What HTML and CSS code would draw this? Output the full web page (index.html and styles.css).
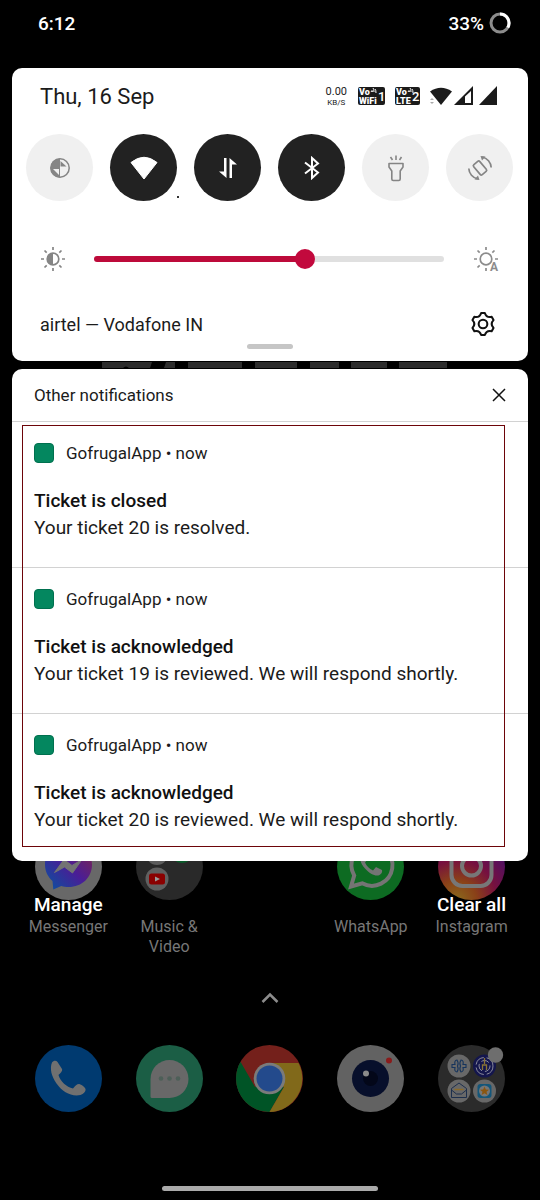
FILE: index.html
```html
<!DOCTYPE html>
<html lang="en">
<head>
    <meta charset="UTF-8">
    <meta name="viewport" content="width=device-width, initial-scale=1.0">
    <title>Notifications</title>
    <link rel="stylesheet" href="styles.css">
</head>
<body>
    <header class="status-bar">
        <span>6:12</span>
        <span class="battery">
            33%
            <svg width="22" height="22" viewBox="0 0 22 22" fill="none" stroke-width="3">
                <circle cx="11" cy="11" r="9" stroke="#8c8c8c"/>
                <path d="M11 2a9 9 0 0 1 7.8 13.5" stroke="#fff"/>
            </svg>
        </span>
    </header>

    <section class="card quick-settings">
        <div class="date-row">
            <span class="date">Thu, 16 Sep</span>
            <div class="net-speed"><span>0.00</span><small>KB/S</small></div>
            <div class="status-icons">
                <svg width="27" height="18" viewBox="0 0 27 18">
                    <rect width="27" height="18" rx="2" fill="#1b1b1b"/>
                    <text x="1" y="8" class="badge-text">Vo</text>
                    <text x="1" y="17" class="badge-text">WiFi</text>
                    <text x="20" y="14" class="badge-num">1</text>
                    <path d="M13 5q1-3 2 0M16 5q0-3-1-4M18 6q0-3-1-4" stroke="#fff" fill="none"/>
                </svg>
                <svg width="25" height="18" viewBox="0 0 25 18">
                    <rect width="25" height="18" rx="2" fill="#1b1b1b"/>
                    <text x="1" y="8" class="badge-text">Vo</text>
                    <text x="1" y="17" class="badge-text">LTE</text>
                    <text x="17" y="14" class="badge-num">2</text>
                    <path d="M13 5q1-3 2 0M16 5q0-3-1-4M18 6q0-3-1-4" stroke="#fff" fill="none"/>
                </svg>
                <svg width="68" height="20" viewBox="0 0 68 20">
                    <path d="M0 5.500Q11-2 22 5.500L11 19z" fill="#1b1b1b"/>
                    <path d="M0 14l2-2 2 2zM0 16l2 2 2-2z" fill="#aaa"/>
                    <path d="M24 19L43 0v19z" fill="#1b1b1b"/>
                    <path d="M35 10.500L41 5v12h-6z" fill="#fff"/>
                    <path d="M49 19L67 0v19z" fill="#1b1b1b"/>
                </svg>
            </div>
        </div>

        <div class="tiles">
            <button class="tile" aria-label="Data saver">
                <svg width="24" height="24" viewBox="0 0 24 24">
                    <circle cx="12" cy="12" r="9.200" fill="none" stroke="#858585" stroke-width="1.500"/>
                    <path d="M12 2.500a9.500 9.500 0 0 0 0 19z" fill="#858585"/>
                    <path d="M12.500 10.500V5l6 5.500z" fill="#858585"/>
                    <path d="M11 13v6l-6-6z" fill="#f0f0f0"/>
                </svg>
            </button>
            <button class="tile on" aria-label="Wi-Fi">
                <svg width="30" height="30" viewBox="0 0 30 30">
                    <path d="M2 9.500Q15-1 28 9.500L15 26z" fill="#fff" stroke="#fff" stroke-linejoin="round"/>
                </svg>
                <span class="tile-dot"></span>
            </button>
            <button class="tile on" aria-label="Mobile data">
                <svg width="24" height="24" viewBox="0 0 24 24" fill="#fff">
                    <path d="M8 2h2.500v20L3 15.500h5z"/>
                    <path d="M13.500 2l7.500 6.500h-5V22h-2.500z"/>
                </svg>
            </button>
            <button class="tile on" aria-label="Bluetooth">
                <svg width="24" height="24" viewBox="0 0 24 24" fill="none" stroke="#fff" stroke-width="2">
                    <path d="M5 6.500l13 10-6 5.500V2l6 5.500-13 10"/>
                </svg>
            </button>
            <button class="tile" aria-label="Flashlight">
                <svg width="26" height="28" viewBox="0 0 26 28" fill="none" stroke="#858585" stroke-width="1.600">
                    <path d="M6 9.500h14v3.500l-2.800 4v8q0 1.500-1.500 1.500h-5.400q-1.500 0-1.500-1.500v-8L6 13z" stroke-linejoin="round"/>
                    <path d="M13 1.500V6M7.500 3l2 3M18.500 3l-2 3"/>
                </svg>
            </button>
            <button class="tile" aria-label="Auto-rotate">
                <svg width="28" height="28" viewBox="0 0 28 28" fill="none" stroke="#858585" stroke-width="1.700">
                    <rect x="10" y="7.500" width="8" height="13" rx="1.500" transform="rotate(-40 14 14)"/>
                    <path d="M2.800 14.500a11.200 11.200 0 0 0 9 10.500M25.200 13.500a11.200 11.200 0 0 0-9-10.500"/>
                    <path d="M13.500 26l-5-.5 3.500-4zM14.500 2l5 .5-3.500 4z" fill="#858585" stroke="none"/>
                </svg>
            </button>
        </div>

        <div class="brightness">
            <svg width="26" height="26" viewBox="0 0 26 26" fill="none" stroke="#858585" stroke-width="1.700">
                <circle cx="13" cy="13" r="5.800"/>
                <path d="M13 7a6 6 0 0 0 0 12z" fill="#858585" stroke="none"/>
                <path d="M13 1v3M13 22v3M1 13h3M22 13h3M4.500 4.500l2.200 2.200M19.300 19.300l2.200 2.200M4.500 21.500l2.200-2.200M19.300 6.700l2.200-2.200"/>
            </svg>
            <input type="range" class="slider" min="0" max="100" value="61" aria-label="Brightness">
            <svg width="28" height="28" viewBox="0 0 28 28" fill="none" stroke="#8c8c8c" stroke-width="1.700">
                <circle cx="14" cy="14" r="5.800"/>
                <path d="M14 2v3M14 23v3M2 14h3M23 14h3M5.500 5.500l2.200 2.200M5.500 22.500l2.200-2.200M20.300 7.700l2.200-2.200"/>
                <text x="18" y="26" class="auto-text">A</text>
            </svg>
        </div>

        <div class="carrier-row">
            <span>airtel — Vodafone IN</span>
            <button class="icon-btn" aria-label="Settings">
                <svg width="26" height="26" viewBox="0 0 24 24" fill="none" stroke="#111" stroke-width="1.900" stroke-linejoin="round">
                    <circle cx="12" cy="12" r="4"/>
                    <path d="M10.300 1.800H13.700Q15.100 6.500 20 5.400L21.700 8.400Q18.300 12 21.700 15.600L20 18.600Q15.100 17.500 13.700 22.200H10.300Q8.900 17.500 4 18.600L2.300 15.600Q5.700 12 2.300 8.400L4 5.400Q8.900 6.500 10.300 1.800z"/>
                </svg>
            </button>
        </div>
        <div class="drag-handle"></div>
    </section>

    <!-- lower edge of the clock widget that shows between the cards -->
    <svg class="widget-strip" width="345" height="8" viewBox="0 0 345 8" fill="#2d2d2d">
        <path d="M0 1h50l-2 6H27q-3-3-6 0H0zM64 1h9v6H62zM86 1h54v6H86zM153 1h42v6h-42zM208 1h29v6h-29zM249 1h36v6h-36zM297 1h48v6h-48z"/>
    </svg>

    <section class="card notifications">
        <div class="notifications-header">
            <h2>Other notifications</h2>
            <button class="icon-btn" aria-label="Dismiss">
                <svg width="14" height="14" viewBox="0 0 14 14" stroke="#111" stroke-width="1.500">
                    <path d="M1 1l12 12M13 1L1 13"/>
                </svg>
            </button>
        </div>
        <div class="notification-list">
            <article class="notification">
                <div class="meta"><span class="app-icon"></span>GofrugalApp • now</div>
                <h3>Ticket is closed</h3>
                <p>Your ticket 20 is resolved.</p>
            </article>
            <article class="notification">
                <div class="meta"><span class="app-icon"></span>GofrugalApp • now</div>
                <h3>Ticket is acknowledged</h3>
                <p>Your ticket 19 is reviewed. We will respond shortly.</p>
            </article>
            <article class="notification">
                <div class="meta"><span class="app-icon"></span>GofrugalApp • now</div>
                <h3>Ticket is acknowledged</h3>
                <p>Your ticket 20 is reviewed. We will respond shortly.</p>
            </article>
            <div class="highlight"></div>
        </div>
        <div class="shade-actions">
            <button>Manage</button>
            <button>Clear all</button>
        </div>
    </section>

    <nav class="apps">
        <a href="#" class="app">
            <svg width="67" height="67" viewBox="0 0 67 67">
                <defs>
                    <linearGradient id="messenger" x1="0" y1="1" x2="1" y2="0">
                        <stop offset="0" stop-color="#0555a0"/>
                        <stop offset=".5" stop-color="#4a1d96"/>
                        <stop offset="1" stop-color="#85263f"/>
                    </linearGradient>
                </defs>
                <circle cx="33.500" cy="33.500" r="33.500" fill="#686868"/>
                <path d="M33.500 9C20 9 10 18 10 31.500c0 7 3 12.500 7.500 16.500l.8 8.500 8-3.500c2.300.6 4.500 1 7.200 1C47 54 57 44.500 57 31.500S47 9 33.500 9z" fill="url(#messenger)"/>
                <path d="M19.500 39.500l9.500-13 8 6 10-6-9.500 13.500-8-6z" fill="#737373" stroke="#737373" stroke-linejoin="round"/>
            </svg>
            <span>Messenger</span>
        </a>
        <a href="#" class="app">
            <svg width="67" height="67" viewBox="0 0 67 67">
                <circle cx="33.500" cy="33.500" r="33.500" fill="#292929"/>
                <circle cx="21" cy="21" r="11" fill="#5c5c5c"/>
                <circle cx="46" cy="19" r="11" fill="#0b5a2a"/>
                <circle cx="21" cy="46" r="11.500" fill="#606060"/>
                <rect x="13" y="40.500" width="16" height="11" rx="2.500" fill="#8a0000"/>
                <path d="M19 43.500l5 2.500-5 2.500z" fill="#999"/>
            </svg>
            <span>Music &amp; Video</span>
        </a>
        <a href="#" class="app app-third">
            <svg width="67" height="67" viewBox="0 0 67 67">
                <circle cx="33.500" cy="33.500" r="33.500" fill="#0d6b22"/>
                <path d="M14 53.500l3.200-11a20.500 20.500 0 1 1 8 7.800z" fill="none" stroke="#747474" stroke-width="4"/>
                <path d="M25 22c-3 3-2 8 3 13.500s11 8.500 14.500 6.500c2-1 3-3 2.500-5l-6-3-3 3.500c-4-2-6-4-8-8l2.500-3-2.500-6z" fill="#747474"/>
            </svg>
            <span>WhatsApp</span>
        </a>
        <a href="#" class="app">
            <svg width="67" height="67" viewBox="0 0 67 67">
                <defs>
                    <radialGradient id="insta" cx=".28" cy="1" r="1">
                        <stop offset="0" stop-color="#8a6a1d"/>
                        <stop offset=".3" stop-color="#8a4018"/>
                        <stop offset=".6" stop-color="#76103f"/>
                        <stop offset="1" stop-color="#46106a"/>
                    </radialGradient>
                </defs>
                <circle cx="33.500" cy="33.500" r="33.500" fill="url(#insta)"/>
                <g fill="none" stroke="#777" stroke-width="4">
                    <rect x="13.500" y="13" width="40" height="40" rx="11"/>
                    <circle cx="33.500" cy="33" r="9.500"/>
                </g>
                <circle cx="45" cy="22" r="2.500" fill="#777"/>
            </svg>
            <span>Instagram</span>
        </a>
    </nav>

    <svg class="chevron" width="20" height="12" viewBox="0 0 20 12" fill="none" stroke="#8c8c8c" stroke-width="2.500">
        <path d="M2.500 10L10 2.500l7.500 7.500"/>
    </svg>

    <nav class="apps dock">
        <a href="#" class="app" aria-label="Phone">
            <svg width="67" height="67" viewBox="0 0 67 67">
                <circle cx="33.500" cy="33.500" r="33.500" fill="#003a70"/>
                <path d="M17 17.500c1.500-2 4-2.500 5.500-.5l4.500 7c1 2-2.500 5-3.500 6 2 6.500 8 12 14.500 13.500 2-2.500 4-4.500 6-4.500 2.500.5 6 3 6.500 5 .5 2.500-2 5-5 6-9 2-18-3-24-11.500-5-7-7-15-4.500-21z" fill="#707070"/>
            </svg>
        </a>
        <a href="#" class="app" aria-label="Messages">
            <svg width="67" height="67" viewBox="0 0 67 67">
                <circle cx="33.500" cy="33.500" r="33.500" fill="#1b5e45"/>
                <path d="M16 53q-1.500 0-1.500-1.500V34a19 19 0 1 1 19 19z" fill="#686868"/>
                <g fill="#4d5f58">
                    <circle cx="25" cy="33.500" r="2.300"/>
                    <circle cx="33.500" cy="33.500" r="2.300"/>
                    <circle cx="42" cy="33.500" r="2.300"/>
                </g>
            </svg>
        </a>
        <a href="#" class="app" aria-label="Chrome">
            <svg width="67" height="67" viewBox="0 0 67 67">
                <circle cx="33.500" cy="33.500" r="33.500" fill="#74201b"/>
                <path d="M4.500 16.750A33.500 33.500 0 0 0 33.500 67L48 41.900 33.500 33.500 19 41.900z" fill="#005426"/>
                <path d="M33.500 67a33.500 33.500 0 0 0 29-49H33.500v16L48 41.900z" fill="#81691a"/>
                <circle cx="33.500" cy="33.500" r="15.800" fill="#7b7b7b"/>
                <circle cx="33.500" cy="33.500" r="13" fill="#234a8c"/>
            </svg>
        </a>
        <a href="#" class="app" aria-label="Camera">
            <svg width="67" height="67" viewBox="0 0 67 67">
                <circle cx="33.500" cy="33.500" r="33.500" fill="#626262"/>
                <circle cx="33.500" cy="33.500" r="18.500" fill="#070f2b"/>
                <circle cx="33.500" cy="33.500" r="7.500" fill="#030719"/>
                <circle cx="29" cy="28.500" r="3" fill="#8a8a8a"/>
                <circle cx="52" cy="15.500" r="3" fill="#8a1b1b"/>
            </svg>
        </a>
        <a href="#" class="app" aria-label="Folder">
            <svg width="67" height="67" viewBox="0 0 67 67">
                <circle cx="33.500" cy="33.500" r="33.500" fill="#2b2b2b"/>
                <g fill="#686868">
                    <circle cx="21" cy="21" r="11.500"/>
                    <circle cx="21" cy="46" r="11.500"/>
                    <circle cx="46.500" cy="46" r="11.500"/>
                </g>
                <circle cx="46.500" cy="21" r="11.500" fill="#14164d"/>
                <g fill="none" stroke="#8a8a9c">
                    <circle cx="46.500" cy="21" r="8.500" stroke-dasharray="11 3"/>
                    <circle cx="46.500" cy="21" r="5.500" stroke-dasharray="8 3"/>
                </g>
                <path d="M46.500 13v6M44.500 25v-5h4v5" fill="none" stroke="#8a7435" stroke-width="1.300"/>
                <path d="M14 19.500h3q-1-4 2-4.500 2 3 .5 6 1.500 3-.5 6-3-.5-2-4.500h-3zM28 19.500h-3q1-4-2-4.500-2 3-.5 6-1.500 3 .5 6 3-.5 2-4.500h3z" fill="none" stroke="#16345c" stroke-width="1.100"/>
                <path d="M13.500 43.500l7.500-5.500 7.500 5.500v9h-15zM13.500 45l5 4h5l5-4" fill="none" stroke="#1d2f4c"/>
                <path d="M16.500 44.500h9" stroke="#8a6a28" stroke-width="1.500"/>
                <rect x="39.500" y="39" width="14" height="14" rx="3" fill="#14567a"/>
                <circle cx="46.500" cy="46" r="5.500" fill="#777"/>
                <path d="M46.500 41.500l1.300 3 3.200.2-2.500 2 .9 3.300-2.900-1.800-2.900 1.800.9-3.300-2.500-2 3.200-.2z" fill="#8a5610"/>
                <circle cx="57.500" cy="10" r="7.700" fill="#6e6e6e"/>
            </svg>
        </a>
    </nav>
    <div class="home-bar"></div>
</body>
</html>
```
FILE: styles.css
```css
* {
    box-sizing: border-box;
}

body {
    margin: 0;
    min-height: 100vh;
    display: flex;
    flex-direction: column;
    background-color: #000;
    font-family: Roboto, "Liberation Sans", sans-serif;
    color: #1b1b1b;
}

h2, h3, p {
    margin: 0;
}

svg {
    display: block;
    flex-shrink: 0;
}

button {
    padding: 0;
    border: none;
    background: none;
    font-family: inherit;
    cursor: pointer;
}

.status-bar {
    display: flex;
    justify-content: space-between;
    align-items: center;
    height: 46px;
    margin-bottom: 22px;
    padding: 0 29px 0 38px;
    color: #fff;
    font-size: 19px;
    font-weight: 500;
}

.battery {
    display: flex;
    align-items: center;
    gap: 5px;
}

.card {
    position: relative;
    z-index: 1;
    margin: 0 12px;
    background-color: #fff;
    border-radius: 10px;
}

/* quick settings */
.quick-settings {
    padding-bottom: 12px;
}

.date-row {
    display: flex;
    align-items: center;
    height: 56px;
    padding: 0 30px 0 28px;
}

.date {
    margin-right: auto;
    font-size: 22px;
}

.net-speed {
    display: flex;
    flex-direction: column;
    align-items: center;
    margin-right: 11px;
    font-size: 11px;
    line-height: 13px;
}

.net-speed small {
    font-size: 8px;
    line-height: 10px;
}

.status-icons {
    display: flex;
    align-items: center;
    gap: 10px;
}

.badge-text {
    fill: #fff;
    font-size: 9px;
    font-weight: 900;
}

.badge-num {
    fill: #fff;
    font-size: 13px;
    font-weight: 500;
}

.tiles {
    display: flex;
    justify-content: space-between;
    margin-top: 10px;
    padding: 0 15px 0 14px;
}

.tile {
    position: relative;
    display: flex;
    align-items: center;
    justify-content: center;
    width: 67px;
    height: 67px;
    border-radius: 50%;
    background-color: #f0f0f0;
}

.tile.on {
    background-color: #222;
}

.tile-dot {
    position: absolute;
    right: -2px;
    bottom: 3px;
    width: 2px;
    height: 2px;
    background-color: #333;
}

.brightness {
    display: flex;
    align-items: center;
    margin-top: 44px;
    padding: 0 28px;
}

.slider {
    flex: 1;
    height: 20px;
    margin: 0 28px;
    appearance: none;
    background: none;
}

.slider::-webkit-slider-runnable-track {
    height: 6px;
    border-radius: 3px;
    background: linear-gradient(to right, #bd0a3a 61%, #e0e0e0 61%);
}

.slider::-webkit-slider-thumb {
    appearance: none;
    width: 20px;
    height: 20px;
    margin-top: -7px;
    border-radius: 50%;
    background-color: #c2093d;
}

.auto-text {
    fill: #8c8c8c;
    stroke: none;
    font-size: 12px;
    font-weight: 700;
}

.carrier-row {
    display: flex;
    justify-content: space-between;
    align-items: center;
    margin-top: 38px;
    padding: 0 32px 0 28px;
    font-size: 18px;
}

.drag-handle {
    width: 46px;
    height: 5px;
    margin: 7px auto 0;
    border-radius: 3px;
    background-color: #c6c6c6;
}

.widget-strip {
    align-self: center;
    margin-left: 8px;
}

/* notifications */
.notifications-header {
    display: flex;
    justify-content: space-between;
    align-items: center;
    height: 53px;
    padding: 0 22px;
    border-bottom: 1px solid #d2d2d2;
}

.notifications-header h2 {
    font-size: 17px;
    font-weight: 400;
}

.notification-list {
    position: relative;
}

.notification {
    padding: 21px 22px 26px;
    border-bottom: 1px solid #d2d2d2;
}

.notification:nth-child(3) {
    padding-bottom: 28px;
    border-bottom: none;
}

.meta {
    display: flex;
    align-items: center;
    gap: 12px;
    height: 20px;
    font-size: 17px;
}

.app-icon {
    width: 20px;
    height: 20px;
    border: 1px solid #00704f;
    border-radius: 4px;
    background-color: #04875f;
}

.notification h3 {
    margin-top: 24px;
    color: #111;
    font-size: 19px;
    font-weight: 500;
    line-height: 27px;
}

.notification p {
    font-size: 19px;
    line-height: 27px;
}

.highlight {
    position: absolute;
    inset: 3px 23px 14px 10px;
    border: 1px solid #6d0509;
    pointer-events: none;
}

/* buttons laid over the home screen icons */
.shade-actions {
    position: absolute;
    top: 100%;
    left: 0;
    right: 0;
    display: flex;
    justify-content: space-between;
    padding: 32px 22px 0;
}

.shade-actions button {
    color: #fff;
    font-size: 19px;
    font-weight: 500;
    line-height: 24px;
}

/* home screen */
.apps {
    display: grid;
    grid-template-columns: repeat(5, 1fr);
    height: 125px;
    margin-top: -28px;
    padding: 0 18px;
}

.app {
    display: flex;
    flex-direction: column;
    align-items: center;
    color: #777;
    font-size: 16px;
    line-height: 20px;
    text-align: center;
    text-decoration: none;
}

.app span {
    max-width: 84px;
    margin-top: 17px;
}

.app-third {
    grid-column: 4;
}

.chevron {
    align-self: center;
    margin-top: 34px;
}

.dock {
    height: auto;
    margin-top: 41px;
}

.home-bar {
    width: 40%;
    height: 5px;
    margin: auto auto 9px;
    border-radius: 3px;
    background-color: #aaa;
}
```
